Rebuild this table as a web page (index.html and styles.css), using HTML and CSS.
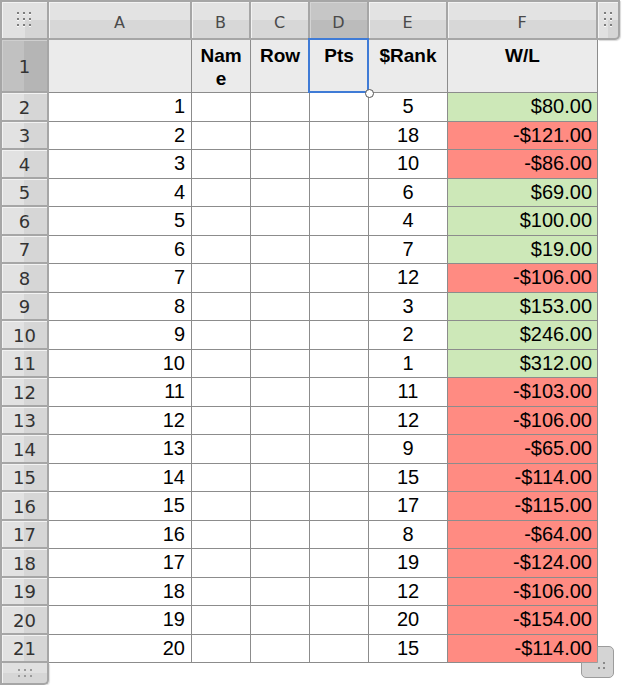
FILE: index.html
```html
<!DOCTYPE html>
<html>
<head>
<meta charset="utf-8">
<link rel="stylesheet" href="styles.css">
</head>
<body>
<div class="sheet">
  <div class="row top">
    <div class="ch corner">
      <svg width="16" height="16" viewBox="0 0 16 16"><g fill="#7d7d7d"><rect x="0" y="0" width="2" height="2"/><rect x="6" y="0" width="2" height="2"/><rect x="12" y="0" width="2" height="2"/><rect x="0" y="6" width="2" height="2"/><rect x="6" y="6" width="2" height="2"/><rect x="12" y="6" width="2" height="2"/><rect x="0" y="12" width="2" height="2"/><rect x="6" y="12" width="2" height="2"/><rect x="12" y="12" width="2" height="2"/></g><g fill="#fafafa"><rect x="0" y="2" width="2" height="1"/><rect x="6" y="2" width="2" height="1"/><rect x="12" y="2" width="2" height="1"/><rect x="0" y="8" width="2" height="1"/><rect x="6" y="8" width="2" height="1"/><rect x="12" y="8" width="2" height="1"/><rect x="0" y="14" width="2" height="1"/><rect x="6" y="14" width="2" height="1"/><rect x="12" y="14" width="2" height="1"/></g></svg>
    </div>
    <div class="ch">A</div>
    <div class="ch">B</div>
    <div class="ch">C</div>
    <div class="ch sel">D</div>
    <div class="ch">E</div>
    <div class="ch">F</div>
    <div class="ch cornerR">
      <svg width="8" height="16" viewBox="0 0 8 16"><g fill="#7d7d7d"><rect x="0" y="0" width="2" height="2"/><rect x="6" y="0" width="2" height="2"/><rect x="0" y="6" width="2" height="2"/><rect x="6" y="6" width="2" height="2"/><rect x="0" y="12" width="2" height="2"/><rect x="6" y="12" width="2" height="2"/></g><g fill="#fafafa"><rect x="0" y="2" width="2" height="1"/><rect x="6" y="2" width="2" height="1"/><rect x="0" y="8" width="2" height="1"/><rect x="6" y="8" width="2" height="1"/><rect x="0" y="14" width="2" height="1"/><rect x="6" y="14" width="2" height="1"/></g></svg>
    </div>
  </div>

  <div class="row head">
    <div class="rh rsel">1</div>
    <div class="c h"></div>
    <div class="c h">Name</div>
    <div class="c h">Row</div>
    <div class="c h active">Pts</div>
    <div class="c h">$Rank</div>
    <div class="c h">W/L</div>
  </div>

  <div class="row"><div class="rh">2</div><div class="c num">1</div><div class="c"></div><div class="c"></div><div class="c"></div><div class="c mid">5</div><div class="c money pos">$80.00</div></div>
  <div class="row"><div class="rh">3</div><div class="c num">2</div><div class="c"></div><div class="c"></div><div class="c"></div><div class="c mid">18</div><div class="c money neg">-$121.00</div></div>
  <div class="row"><div class="rh">4</div><div class="c num">3</div><div class="c"></div><div class="c"></div><div class="c"></div><div class="c mid">10</div><div class="c money neg">-$86.00</div></div>
  <div class="row"><div class="rh">5</div><div class="c num">4</div><div class="c"></div><div class="c"></div><div class="c"></div><div class="c mid">6</div><div class="c money pos">$69.00</div></div>
  <div class="row"><div class="rh">6</div><div class="c num">5</div><div class="c"></div><div class="c"></div><div class="c"></div><div class="c mid">4</div><div class="c money pos">$100.00</div></div>
  <div class="row"><div class="rh">7</div><div class="c num">6</div><div class="c"></div><div class="c"></div><div class="c"></div><div class="c mid">7</div><div class="c money pos">$19.00</div></div>
  <div class="row"><div class="rh">8</div><div class="c num">7</div><div class="c"></div><div class="c"></div><div class="c"></div><div class="c mid">12</div><div class="c money neg">-$106.00</div></div>
  <div class="row"><div class="rh">9</div><div class="c num">8</div><div class="c"></div><div class="c"></div><div class="c"></div><div class="c mid">3</div><div class="c money pos">$153.00</div></div>
  <div class="row"><div class="rh">10</div><div class="c num">9</div><div class="c"></div><div class="c"></div><div class="c"></div><div class="c mid">2</div><div class="c money pos">$246.00</div></div>
  <div class="row"><div class="rh">11</div><div class="c num">10</div><div class="c"></div><div class="c"></div><div class="c"></div><div class="c mid">1</div><div class="c money pos">$312.00</div></div>
  <div class="row"><div class="rh">12</div><div class="c num">11</div><div class="c"></div><div class="c"></div><div class="c"></div><div class="c mid">11</div><div class="c money neg">-$103.00</div></div>
  <div class="row"><div class="rh">13</div><div class="c num">12</div><div class="c"></div><div class="c"></div><div class="c"></div><div class="c mid">12</div><div class="c money neg">-$106.00</div></div>
  <div class="row"><div class="rh">14</div><div class="c num">13</div><div class="c"></div><div class="c"></div><div class="c"></div><div class="c mid">9</div><div class="c money neg">-$65.00</div></div>
  <div class="row"><div class="rh">15</div><div class="c num">14</div><div class="c"></div><div class="c"></div><div class="c"></div><div class="c mid">15</div><div class="c money neg">-$114.00</div></div>
  <div class="row"><div class="rh">16</div><div class="c num">15</div><div class="c"></div><div class="c"></div><div class="c"></div><div class="c mid">17</div><div class="c money neg">-$115.00</div></div>
  <div class="row"><div class="rh">17</div><div class="c num">16</div><div class="c"></div><div class="c"></div><div class="c"></div><div class="c mid">8</div><div class="c money neg">-$64.00</div></div>
  <div class="row"><div class="rh">18</div><div class="c num">17</div><div class="c"></div><div class="c"></div><div class="c"></div><div class="c mid">19</div><div class="c money neg">-$124.00</div></div>
  <div class="row"><div class="rh">19</div><div class="c num">18</div><div class="c"></div><div class="c"></div><div class="c"></div><div class="c mid">12</div><div class="c money neg">-$106.00</div></div>
  <div class="row"><div class="rh">20</div><div class="c num">19</div><div class="c"></div><div class="c"></div><div class="c"></div><div class="c mid">20</div><div class="c money neg">-$154.00</div></div>
  <div class="row"><div class="rh">21</div><div class="c num">20</div><div class="c"></div><div class="c"></div><div class="c"></div><div class="c mid">15</div><div class="c money neg">-$114.00</div></div>

  <div class="foot">
    <svg width="14" height="8" viewBox="0 0 14 8"><g fill="#9a9a9a"><rect x="0" y="0" width="2" height="2"/><rect x="6" y="0" width="2" height="2"/><rect x="12" y="0" width="2" height="2"/><rect x="0" y="6" width="2" height="2"/><rect x="6" y="6" width="2" height="2"/><rect x="12" y="6" width="2" height="2"/></g></svg>
  </div>

  <svg class="grip" width="33" height="32" viewBox="0 0 33 32">
    <path d="M16.5 0.5 H28 A4.5 4.5 0 0 1 32.5 5 V27 A4.5 4.5 0 0 1 28 31.5 H5 A4.5 4.5 0 0 1 0.5 27 V16.5 H16.5 Z" fill="#d4d4d4" stroke="#9c9c9c"/>
    <g fill="#8a8a8a"><rect x="22" y="16" width="2" height="2"/><rect x="22" y="21" width="2" height="2"/><rect x="17" y="21" width="2" height="2"/></g>
  </svg>
</div>
</body>
</html>
```

FILE: styles.css
```css
html, body {
  margin: 0;
  padding: 0;
  background: #ffffff;
}

.sheet {
  position: relative;
  width: 632px;
  font-family: "Liberation Sans", Arial, sans-serif;
  color: #000;
}

.row {
  display: grid;
  grid-template-columns: 49px 143px 59px 59px 59px 79px 150px;
  height: 28.5px;
}

.row.top {
  grid-template-columns: 49px 143px 59px 59px 59px 79px 150px 22px;
  height: 40px;
}

.row.head {
  height: 53px;
}

.ch {
  box-sizing: border-box;
  border-top: 2px solid #a6a6a6;
  border-right: 2px solid #a6a6a6;
  border-bottom: 2px solid #a6a6a6;
  background: linear-gradient(#e3e3e3 50%, #d7d7d7 50%);
  box-shadow: inset 1px 1px 0 #f3f3f3;
  display: flex;
  align-items: center;
  justify-content: center;
  padding-top: 4px;
  font-family: "DejaVu Sans", sans-serif;
  font-size: 16px;
  color: #4a4a4a;
}

.ch.sel {
  background: linear-gradient(#c6c6c6 50%, #bbbbbb 50%);
  box-shadow: inset 1px 1px 0 #d4d4d4;
}

.ch.corner {
  border-left: 2px solid #a6a6a6;
  padding-top: 0;
  background:
    linear-gradient(#d5d5d5, #d5d5d5) right bottom / 50% 50% no-repeat,
    #e1e1e1;
}

.ch.cornerR {
  padding-top: 0;
  border-radius: 0 0 5px 0;
  background:
    linear-gradient(#d5d5d5, #d5d5d5) right bottom / 50% 50% no-repeat,
    #e1e1e1;
  box-shadow: inset 1px 1px 0 #f3f3f3, 1px 1px 1px rgba(0, 0, 0, 0.15);
}

.rh {
  box-sizing: border-box;
  border-left: 2px solid #a6a6a6;
  border-right: 2px solid #a6a6a6;
  border-bottom: 2px solid #a6a6a6;
  background: linear-gradient(90deg, #e2e2e2 50%, #d6d6d6 50%);
  box-shadow: inset 1px 1px 0 #f3f3f3;
  display: flex;
  align-items: center;
  justify-content: center;
  padding-top: 2px;
  font-family: "DejaVu Sans", sans-serif;
  font-size: 18px;
  color: #333;
}

.rh.rsel {
  background: linear-gradient(90deg, #c1c1c1 50%, #b5b5b5 50%);
  box-shadow: inset 1px 1px 0 #cfcfcf;
}

.c {
  box-sizing: border-box;
  border-right: 1px solid #8c8c8c;
  border-bottom: 1px solid #8c8c8c;
  background: #fff;
  font-size: 20px;
  line-height: 27px;
  white-space: nowrap;
}

.c.h {
  position: relative;
  background: #ebebeb;
  font-size: 19px;
  font-weight: bold;
  text-align: center;
  white-space: normal;
  word-break: break-all;
  padding: 4px 5px 0;
  line-height: 23px;
}

.c.active::after {
  content: "";
  position: absolute;
  left: -2px;
  top: -2px;
  right: -1px;
  bottom: -1px;
  border: 2px solid #3f7bd6;
}

.c.active::before {
  content: "";
  position: absolute;
  right: -6px;
  bottom: -6px;
  width: 9px;
  height: 9px;
  box-sizing: border-box;
  border: 1px solid #555;
  border-radius: 50%;
  background: #fff;
  z-index: 2;
}

.c.num {
  text-align: right;
  padding-right: 6px;
}

.c.mid {
  text-align: center;
}

.c.money {
  text-align: right;
  padding-right: 5px;
}

.c.pos {
  background: #cde8b8;
}

.c.neg {
  background: #ff8b82;
}

.foot {
  box-sizing: border-box;
  width: 49px;
  height: 22px;
  border: 2px solid #a6a6a6;
  border-top: none;
  border-radius: 0 0 5px 0;
  background: linear-gradient(#e0e0e0 50%, #d6d6d6 50%);
  box-shadow: inset 1px 0 0 #f3f3f3, 1px 1px 1px rgba(0, 0, 0, 0.12);
  display: flex;
  align-items: center;
  justify-content: center;
}

.grip {
  position: absolute;
  left: 581px;
  top: 646px;
}
```
